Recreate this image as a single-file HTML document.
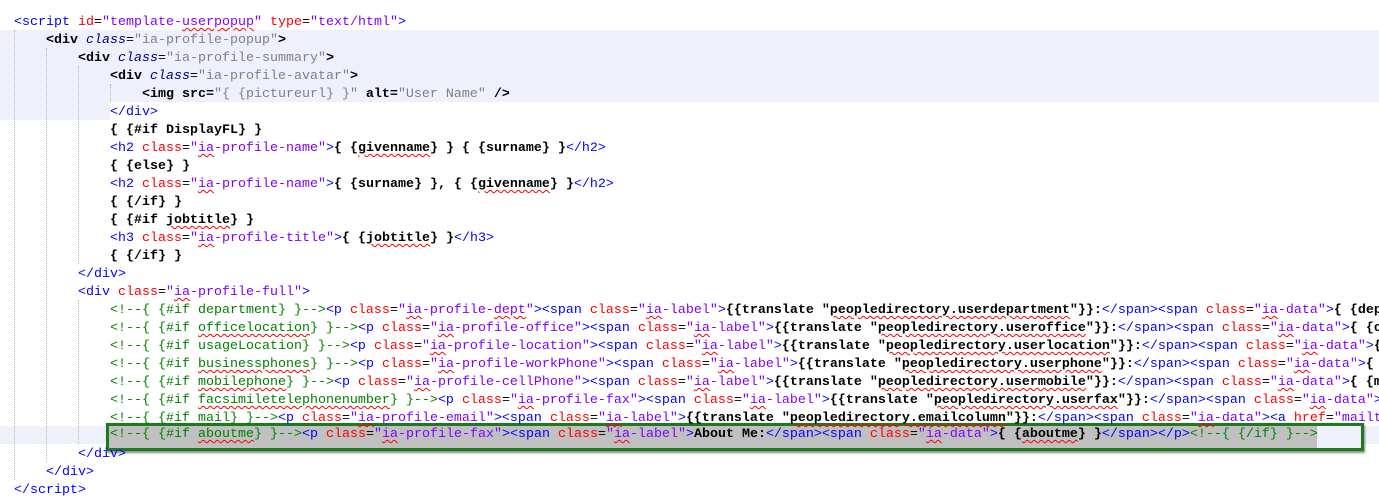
<!DOCTYPE html>
<html><head><meta charset="utf-8"><style>
html,body{margin:0;padding:0;background:#fff;width:1379px;height:502px;overflow:hidden;position:relative}
.l{position:absolute;left:14px;height:18px;line-height:18px;white-space:pre;font-family:"Liberation Mono",monospace;font-size:13.33px;color:#000;width:1365px;overflow:hidden}
.t{color:#0000ff}.a{color:#ff0000}.v{color:#8000ff}.c{color:#008000}.k{color:#000;font-weight:bold}
.g{color:#808080}.n{color:#000080;font-style:italic}
u{text-decoration:underline wavy #ff0000;text-decoration-thickness:1px;text-underline-offset:2px}
.hl{position:absolute;background:#eef0fc}
.guide{position:absolute;width:0;border-left:1px dotted #b8b8b8}
.box{position:absolute;left:106px;top:423px;width:1252px;height:22px;border:3px solid #1c7a1c;background:#c0c0c0;box-shadow:1px 2px 2px #888}
.box .rest{position:absolute;left:1208px;top:0;right:0;bottom:0;background:#eef0fc}
#w{position:absolute;left:0;top:2px;width:1379px;height:500px}
</style></head><body>
<div class="hl" style="left:0;top:30px;width:1379px;height:72px"></div>
<div class="hl" style="left:0;top:102px;width:110px;height:18px"></div>
<div class="hl" style="left:0;top:426px;width:1379px;height:18px"></div>
<div class="guide" style="left:14px;top:30px;height:450px"></div>
<div class="guide" style="left:46px;top:48px;height:414px"></div>
<div class="guide" style="left:78px;top:66px;height:198px"></div>
<div class="guide" style="left:78px;top:300px;height:144px"></div>
<div class="guide" style="left:110px;top:84px;height:18px"></div>
<div class="box"><div class="rest"></div></div>
<div id="w">
<div class="l" style="top:12px"><span class="t">&lt;script</span> <span class="a">id</span>=<span class="v">"template-<u>userpopup</u>"</span> <span class="a">type</span>=<span class="v">"text/html"</span><span class="t">&gt;</span></div>
<div class="l" style="top:30px">    <span class="k">&lt;div</span> <span class="n">class</span>=<span class="g">"ia-profile-popup"</span><span class="k">&gt;</span></div>
<div class="l" style="top:48px">        <span class="k">&lt;div</span> <span class="n">class</span>=<span class="g">"ia-profile-summary"</span><span class="k">&gt;</span></div>
<div class="l" style="top:66px">            <span class="k">&lt;div</span> <span class="n">class</span>=<span class="g">"ia-profile-avatar"</span><span class="k">&gt;</span></div>
<div class="l" style="top:84px">                <span class="k">&lt;img src=</span><span class="g">"{ {pictureurl} }"</span><span class="k"> alt=</span><span class="g">"User Name"</span><span class="k"> /&gt;</span></div>
<div class="l" style="top:102px">            <span class="t">&lt;/div&gt;</span></div>
<div class="l" style="top:120px">            <span class="k">{ {#if DisplayFL} }</span></div>
<div class="l" style="top:138px">            <span class="t">&lt;h2</span> <span class="a">class</span>=<span class="v">"<u>ia</u>-profile-name"</span><span class="t">&gt;</span><span class="k">{ {<u>givenname</u>} } { {surname} }</span><span class="t">&lt;/h2&gt;</span></div>
<div class="l" style="top:156px">            <span class="k">{ {else} }</span></div>
<div class="l" style="top:174px">            <span class="t">&lt;h2</span> <span class="a">class</span>=<span class="v">"<u>ia</u>-profile-name"</span><span class="t">&gt;</span><span class="k">{ {surname} }, { {<u>givenname</u>} }</span><span class="t">&lt;/h2&gt;</span></div>
<div class="l" style="top:192px">            <span class="k">{ {/if} }</span></div>
<div class="l" style="top:210px">            <span class="k">{ {#if <u>jobtitle</u>} }</span></div>
<div class="l" style="top:228px">            <span class="t">&lt;h3</span> <span class="a">class</span>=<span class="v">"<u>ia</u>-profile-title"</span><span class="t">&gt;</span><span class="k">{ {<u>jobtitle</u>} }</span><span class="t">&lt;/h3&gt;</span></div>
<div class="l" style="top:246px">            <span class="k">{ {/if} }</span></div>
<div class="l" style="top:264px">        <span class="t">&lt;/div&gt;</span></div>
<div class="l" style="top:282px">        <span class="t">&lt;div</span> <span class="a">class</span>=<span class="v">"<u>ia</u>-profile-full"</span><span class="t">&gt;</span></div>
<div class="l" style="top:300px">            <span class="c">&lt;!--{ {#if department} }--&gt;</span><span class="t">&lt;p</span> <span class="a">class</span>=<span class="v">"<u>ia</u>-profile-<u>dept</u>"</span><span class="t">&gt;&lt;span</span> <span class="a">class</span>=<span class="v">"<u>ia</u>-label"</span><span class="t">&gt;</span><span class="k">{{translate "<u>peopledirectory.userdepartment</u>"}}:</span><span class="t">&lt;/span&gt;&lt;span</span> <span class="a">class</span>=<span class="v">"<u>ia</u>-data"</span><span class="t">&gt;</span><span class="k">{ {department} }</span></div>
<div class="l" style="top:318px">            <span class="c">&lt;!--{ {#if <u>officelocation</u>} }--&gt;</span><span class="t">&lt;p</span> <span class="a">class</span>=<span class="v">"<u>ia</u>-profile-office"</span><span class="t">&gt;&lt;span</span> <span class="a">class</span>=<span class="v">"<u>ia</u>-label"</span><span class="t">&gt;</span><span class="k">{{translate "<u>peopledirectory.useroffice</u>"}}:</span><span class="t">&lt;/span&gt;&lt;span</span> <span class="a">class</span>=<span class="v">"<u>ia</u>-data"</span><span class="t">&gt;</span><span class="k">{ {officelocation} }</span></div>
<div class="l" style="top:336px">            <span class="c">&lt;!--{ {#if usageLocation} }--&gt;</span><span class="t">&lt;p</span> <span class="a">class</span>=<span class="v">"<u>ia</u>-profile-location"</span><span class="t">&gt;&lt;span</span> <span class="a">class</span>=<span class="v">"<u>ia</u>-label"</span><span class="t">&gt;</span><span class="k">{{translate "<u>peopledirectory.userlocation</u>"}}:</span><span class="t">&lt;/span&gt;&lt;span</span> <span class="a">class</span>=<span class="v">"<u>ia</u>-data"</span><span class="t">&gt;</span><span class="k">{ {usageLocation} }</span></div>
<div class="l" style="top:354px">            <span class="c">&lt;!--{ {#if <u>businessphones</u>} }--&gt;</span><span class="t">&lt;p</span> <span class="a">class</span>=<span class="v">"<u>ia</u>-profile-workPhone"</span><span class="t">&gt;&lt;span</span> <span class="a">class</span>=<span class="v">"<u>ia</u>-label"</span><span class="t">&gt;</span><span class="k">{{translate "<u>peopledirectory.userphone</u>"}}:</span><span class="t">&lt;/span&gt;&lt;span</span> <span class="a">class</span>=<span class="v">"<u>ia</u>-data"</span><span class="t">&gt;</span><span class="k">{ {businessphones} }</span></div>
<div class="l" style="top:372px">            <span class="c">&lt;!--{ {#if <u>mobilephone</u>} }--&gt;</span><span class="t">&lt;p</span> <span class="a">class</span>=<span class="v">"<u>ia</u>-profile-cellPhone"</span><span class="t">&gt;&lt;span</span> <span class="a">class</span>=<span class="v">"<u>ia</u>-label"</span><span class="t">&gt;</span><span class="k">{{translate "<u>peopledirectory.usermobile</u>"}}:</span><span class="t">&lt;/span&gt;&lt;span</span> <span class="a">class</span>=<span class="v">"<u>ia</u>-data"</span><span class="t">&gt;</span><span class="k">{ {mobilephone} }</span></div>
<div class="l" style="top:390px">            <span class="c">&lt;!--{ {#if <u>facsimiletelephonenumber</u>} }--&gt;</span><span class="t">&lt;p</span> <span class="a">class</span>=<span class="v">"<u>ia</u>-profile-fax"</span><span class="t">&gt;&lt;span</span> <span class="a">class</span>=<span class="v">"<u>ia</u>-label"</span><span class="t">&gt;</span><span class="k">{{translate "<u>peopledirectory.userfax</u>"}}:</span><span class="t">&lt;/span&gt;&lt;span</span> <span class="a">class</span>=<span class="v">"<u>ia</u>-data"</span><span class="t">&gt;</span><span class="k">{ {fax} }</span></div>
<div class="l" style="top:408px">            <span class="c">&lt;!--{ {#if mail} }--&gt;</span><span class="t">&lt;p</span> <span class="a">class</span>=<span class="v">"<u>ia</u>-profile-email"</span><span class="t">&gt;&lt;span</span> <span class="a">class</span>=<span class="v">"<u>ia</u>-label"</span><span class="t">&gt;</span><span class="k">{{translate "<u>peopledirectory.emailcolumn</u>"}}:</span><span class="t">&lt;/span&gt;&lt;span</span> <span class="a">class</span>=<span class="v">"<u>ia</u>-data"</span><span class="t">&gt;&lt;a</span> <span class="a">href</span>=<span class="v">"mailto:</span></div>
<div class="l" style="top:424px">            <span class="c">&lt;!--{ {#if <u>aboutme</u>} }--&gt;</span><span class="t">&lt;p</span> <span class="a">class</span>=<span class="v">"<u>ia</u>-profile-fax"</span><span class="t">&gt;&lt;span</span> <span class="a">class</span>=<span class="v">"<u>ia</u>-label"</span><span class="t">&gt;</span><span class="k">About Me:</span><span class="t">&lt;/span&gt;&lt;span</span> <span class="a">class</span>=<span class="v">"<u>ia</u>-data"</span><span class="t">&gt;</span><span class="k">{ {<u>aboutme</u>} }</span><span class="t">&lt;/span&gt;&lt;/p&gt;</span><span class="c">&lt;!--{ {/if} }--&gt;</span></div>
<div class="l" style="top:444px">        <span class="t">&lt;/div&gt;</span></div>
<div class="l" style="top:462px">    <span class="t">&lt;/div&gt;</span></div>
<div class="l" style="top:480px"><span class="t">&lt;/script&gt;</span></div>
</div>
</body></html>
